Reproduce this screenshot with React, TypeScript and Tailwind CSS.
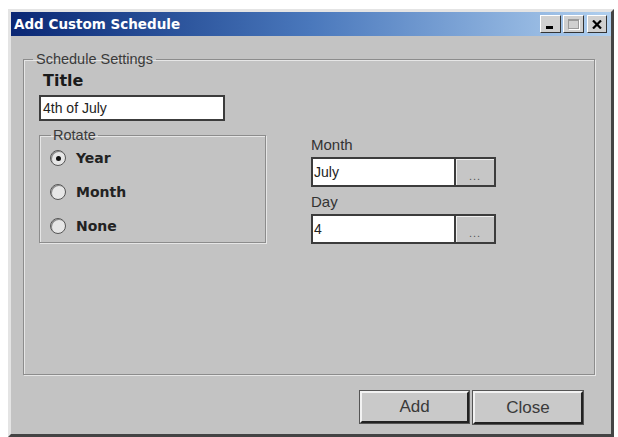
import React from "react";

const labelFont = { fontFamily: '"Liberation Sans", Arial, sans-serif' };
const boldFont = { fontFamily: '"DejaVu Sans", Verdana, sans-serif' };

function Radio({ label, checked }: { label: string; checked?: boolean }) {
  return (
    <div className="flex h-[30px] items-center gap-[10px]">
      <span className="flex h-[16px] w-[16px] items-center justify-center rounded-full border border-[#555] bg-[#e6e6e6] shadow-[inset_1px_1px_0_#888]">
        {checked && <span className="h-[5px] w-[5px] rounded-full bg-[#111]" />}
      </span>
      <span className="text-[14px] font-bold text-[#222]" style={boldFont}>
        {label}
      </span>
    </div>
  );
}

function Field({ label, value }: { label: string; value: string }) {
  return (
    <div className="flex flex-col">
      <span className="h-[17px] text-[15px] leading-[16px] text-[#333]" style={labelFont}>
        {label}
      </span>
      <div className="mt-[3px] flex h-[30px]">
        <div
          className="flex w-[145px] items-center border-2 border-[#3c3c3c] bg-white pl-[1px] text-[14px] text-[#222]"
          style={labelFont}
        >
          {value}
        </div>
        <button
          type="button"
          className="flex w-[40px] items-end justify-center border-2 border-l-0 border-[#3c3c3c] bg-[#c6c6c6] pb-[4px] text-[11px] leading-[10px] tracking-[1px] text-[#555] shadow-[inset_1px_1px_0_#eee]"
          style={labelFont}
        >
          ...
        </button>
      </div>
    </div>
  );
}

export default function App() {
  return (
    <div className="h-[437px] w-[618px] bg-white pl-[8px] pt-[9px]">
      <div className="flex h-[428px] w-[606px] flex-col border-[3px] border-b-[#444] border-l-[#e4e4e4] border-r-[#444] border-t-[#e4e4e4] bg-[#c3c3c3]">
        {/* title bar */}
        <div className="flex h-[24px] items-center justify-between bg-gradient-to-r from-[#0b2774] via-[#4a78bc] to-[#b0cfee] pl-[3px] pr-[4px]">
          <span className="text-[13.5px] font-bold text-white" style={boldFont}>
            Add Custom Schedule
          </span>
          <div className="flex items-center">
            <div className="flex h-[18px] w-[21px] items-end border border-b-[#333] border-l-white border-r-[#333] border-t-white bg-[#d0d0d0] pb-[3px] pl-[5px]">
              <span className="h-[3px] w-[7px] bg-black" />
            </div>
            <div className="ml-[2px] flex h-[18px] w-[21px] items-center justify-center border border-b-[#333] border-l-white border-r-[#333] border-t-white bg-[#d0d0d0]">
              <span className="h-[10px] w-[11px] border border-t-2 border-[#9a9a9a] shadow-[1px_1px_0_#fff]" />
            </div>
            <div className="ml-[3px] flex h-[18px] w-[20px] items-center justify-center border border-b-[#333] border-l-white border-r-[#333] border-t-white bg-[#d0d0d0]">
              <svg width="10" height="9" viewBox="0 0 10 9">
                <path d="M1 0.5 L9 8.5 M9 0.5 L1 8.5" stroke="#000" strokeWidth="2.2" />
              </svg>
            </div>
          </div>
        </div>

        {/* body */}
        <div className="flex flex-1 flex-col pl-[12px] pr-[16px] pt-[15px]">
          <fieldset className="h-[324px] border border-[#8c8c8c] shadow-[inset_1px_1px_0_#e6e6e6,1px_1px_0_#e6e6e6]">
            <legend className="ml-[9px] px-[3px] text-[14.5px] leading-[16px] text-[#3a3a3a]" style={labelFont}>
              Schedule Settings
            </legend>
            <div className="flex pl-[15px]">
              <div className="flex w-[227px] flex-col">
                <span className="ml-[4px] mt-[5px] h-[18px] text-[16px] font-bold leading-[18px] text-[#1a1a1a]" style={boldFont}>
                  Title
                </span>
                <div
                  className="mt-[5px] flex h-[26px] w-[186px] items-center border-2 border-[#3c3c3c] bg-white pl-[2px] text-[14px] text-[#222]"
                  style={labelFont}
                >
                  4th of July
                </div>
                <fieldset className="mt-[6px] h-[116px] border border-[#8c8c8c] shadow-[inset_1px_1px_0_#e6e6e6,1px_1px_0_#e6e6e6]">
                  <legend className="ml-[11px] px-[2px] text-[14.5px] leading-[16px] text-[#3a3a3a]" style={labelFont}>
                    Rotate
                  </legend>
                  <div className="flex flex-col gap-[4px] pl-[10px]">
                    <Radio label="Year" checked />
                    <Radio label="Month" />
                    <Radio label="None" />
                  </div>
                </fieldset>
              </div>
              <div className="ml-[45px] flex flex-col pt-[70px]">
                <Field label="Month" value="July" />
                <div className="mt-[7px]">
                  <Field label="Day" value="4" />
                </div>
              </div>
            </div>
          </fieldset>

          <div className="mt-[16px] flex justify-end gap-[3px] pr-[12px]">
            <button
              type="button"
              className="h-[32px] w-[109px] border-2 border-b-[#222] border-l-[#f2f2f2] border-r-[#222] border-t-[#f2f2f2] bg-[#c9c9c9] text-[17px] text-[#3a3a3a] shadow-[0_0_0_1px_#555]"
              style={labelFont}
            >
              Add
            </button>
            <button
              type="button"
              className="ml-[1px] h-[33px] w-[110px] border-2 border-b-[#222] border-l-[#f2f2f2] border-r-[#222] border-t-[#f2f2f2] bg-[#c9c9c9] text-[17px] text-[#3a3a3a] shadow-[0_0_0_1px_#555]"
              style={labelFont}
            >
              Close
            </button>
          </div>
        </div>
      </div>
    </div>
  );
}
